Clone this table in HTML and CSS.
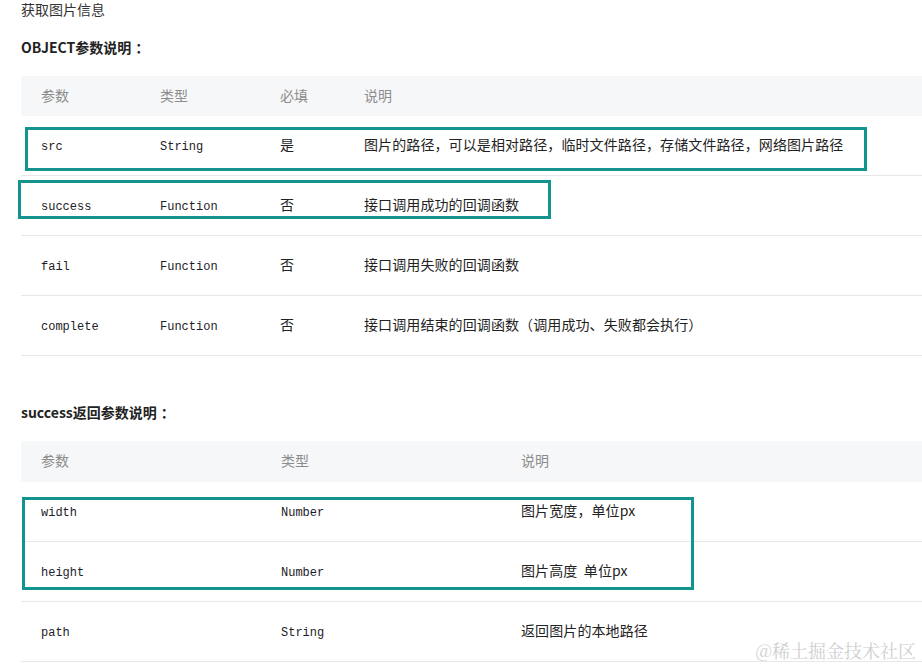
FILE: index.html
```html
<!DOCTYPE html>
<html lang="zh-CN">
<head>
<meta charset="utf-8">
<title>获取图片信息</title>
<link rel="stylesheet" href="styles.css">
</head>
<body>
<div class="page">
  <p class="intro">获取图片信息</p>
  <h3 class="section-title first">OBJECT参数说明<span class="colon">：</span></h3>
  <div class="table t1">
    <div class="row head"><div class="cell">参数</div><div class="cell">类型</div><div class="cell">必填</div><div class="cell">说明</div></div>
    <div class="row"><div class="cell mono">src</div><div class="cell mono">String</div><div class="cell">是</div><div class="cell">图片的路径，可以是相对路径，临时文件路径，存储文件路径，网络图片路径</div></div>
    <div class="row"><div class="cell mono">success</div><div class="cell mono">Function</div><div class="cell">否</div><div class="cell">接口调用成功的回调函数</div></div>
    <div class="row"><div class="cell mono">fail</div><div class="cell mono">Function</div><div class="cell">否</div><div class="cell">接口调用失败的回调函数</div></div>
    <div class="row"><div class="cell mono">complete</div><div class="cell mono">Function</div><div class="cell">否</div><div class="cell">接口调用结束的回调函数（调用成功、失败都会执行）</div></div>
  </div>
  <h3 class="section-title second">success返回参数说明<span class="colon">：</span></h3>
  <div class="table t2">
    <div class="row head"><div class="cell">参数</div><div class="cell">类型</div><div class="cell">说明</div></div>
    <div class="row"><div class="cell mono">width</div><div class="cell mono">Number</div><div class="cell">图片宽度，单位px</div></div>
    <div class="row"><div class="cell mono">height</div><div class="cell mono">Number</div><div class="cell">图片高度&nbsp; 单位px</div></div>
    <div class="row"><div class="cell mono">path</div><div class="cell mono">String</div><div class="cell">返回图片的本地路径</div></div>
  </div>
  <div class="mark mark-src"></div>
  <div class="mark mark-success"></div>
  <div class="mark mark-size"></div>
  <div class="watermark">@稀土掘金技术社区</div>
</div>
</body>
</html>
```

FILE: styles.css
```css
html, body {
  margin: 0;
  padding: 0;
  background: #ffffff;
}
body {
  font-family: "Noto Sans CJK SC", "Noto Sans", sans-serif;
  color: #333333;
  font-size: 14px;
  overflow: hidden;
}
.page {
  position: relative;
  padding-left: 21px;
  height: 667px;
}
.intro {
  margin: 0;
  line-height: 18px;
  font-size: 14px;
  color: #333;
}
.section-title {
  margin: 0;
  font-size: 14px;
  line-height: 18px;
  font-weight: 700;
  color: #222;
}
.colon {
  margin-left: 4px;
}
.section-title.first {
  margin-top: 20px;
  margin-bottom: 20px;
}
.section-title.second {
  margin-top: 47px;
  margin-bottom: 20px;
}
.table {
  display: flex;
  flex-direction: column;
}
.row {
  display: grid;
  height: 60px;
  box-sizing: border-box;
  border-bottom: 1px solid #e8e8e8;
  align-items: center;
}
.row.head {
  height: 40px;
  background: #f6f7f8;
  border-bottom: none;
}
.t1 .row {
  grid-template-columns: 119px 120px 84px 1fr;
}
.t2 .row {
  grid-template-columns: 240px 240px 1fr;
}
.t2 .row.head {
  height: 41px;
}
.cell {
  padding-left: 20px;
  padding-bottom: 3px;
  line-height: 20px;
  white-space: nowrap;
  font-size: 14px;
  letter-spacing: 0.1px;
  color: #222;
}
.head .cell {
  color: #8c8c8c;
}
.mono {
  font-family: "Liberation Mono", "DejaVu Sans Mono", monospace;
  font-size: 12px;
  letter-spacing: 0;
  padding-top: 5px;
  color: #1c1c2a;
}
.mark {
  position: absolute;
  border: 3px solid #13948f;
  box-sizing: border-box;
}
.mark-src {
  left: 25px;
  top: 127px;
  width: 842px;
  height: 44px;
}
.mark-success {
  left: 18px;
  top: 180px;
  width: 533px;
  height: 39px;
}
.mark-size {
  left: 22px;
  top: 497px;
  width: 672px;
  height: 93px;
}
.watermark {
  position: absolute;
  right: 6px;
  top: 638px;
  font-family: "Noto Serif CJK SC", "Noto Sans CJK SC", serif;
  font-size: 18px;
  line-height: 24px;
  color: #cfcfcf;
  white-space: nowrap;
}
```
